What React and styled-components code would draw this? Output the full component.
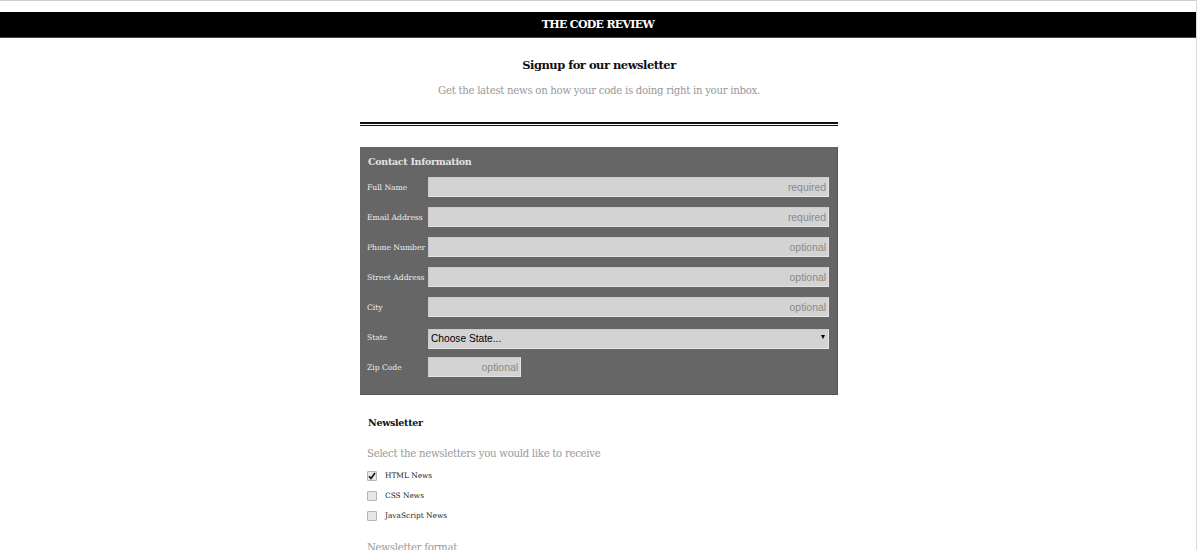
import React from "react";
import styled, { createGlobalStyle } from "styled-components";

const Global = createGlobalStyle`
  html, body { margin: 0; padding: 0; background: #fff; }
  body { font-family: "DejaVu Serif", "Liberation Serif", serif; overflow: hidden; }
`;

const Page = styled.div`
  width: 1196px;
  min-height: 515px;
  border-top: 1px solid #cfcfcf;
  border-right: 1px solid #d8d8d8;
  padding-top: 11px;
  padding-bottom: 40px;
`;

const Header = styled.header`
  height: 25px;
  background: #000;
  display: flex;
  align-items: center;
  justify-content: center;
  border-bottom: 1px solid #444;
`;

const Brand = styled.h1`
  margin: 0;
  color: #fff;
  font-size: 11px;
  font-weight: bold;
  letter-spacing: -0.7px;
`;

const Content = styled.div`
  padding-left: 2px;
`;

const Main = styled.main`
  width: 478px;
  margin: 0 auto;
  display: flex;
  flex-direction: column;
`;

const Title = styled.h2`
  margin: 20px 0 0;
  text-align: center;
  font-size: 11.5px;
  font-weight: bold;
  letter-spacing: -0.5px;
  color: #111;
`;

const Lead = styled.p`
  margin: 13px 0 0;
  text-align: center;
  font-size: 10.2px;
  letter-spacing: -0.3px;
  color: #999;
`;

const Rule = styled.div`
  margin-top: 26px;
  height: 1px;
  border-top: 2px solid #111;
  border-bottom: 1px solid #111;
`;

const Panel = styled.section`
  margin-top: 21px;
  background: #666;
  padding: 9px 8px 17px 7px;
  display: flex;
  flex-direction: column;
  gap: 10px;
  border-right: 1px solid #555;
  border-bottom: 1px solid #555;
`;

const PanelTitle = styled.h3`
  margin: 0 0 0 1px;
  font-size: 9.5px;
  font-weight: bold;
  letter-spacing: -0.3px;
  color: #e4e4e4;
  line-height: 11px;
`;

const Row = styled.div`
  display: flex;
  align-items: center;
  height: 20px;
`;

const Label = styled.label`
  width: 61px;
  flex: none;
  font-size: 7.6px;
  color: #eee;
`;

const Input = styled.input`
  box-sizing: border-box;
  height: 20px;
  width: ${(p) => (p.$w ? `${p.$w}px` : "auto")};
  flex: ${(p) => (p.$w ? "none" : "1")};
  background: #d3d3d3;
  border: 1px solid #e4e4e4;
  border-top-color: #cacaca;
  border-left-color: #cacaca;
  padding: 0 2px;
  text-align: right;
  font-family: "Liberation Sans", Arial, sans-serif;
  font-size: 10.4px;
  outline: none;
  &::placeholder { color: #8a8a8a; }
`;

const SelectWrap = styled.div`
  position: relative;
  flex: 1;
  height: 20px;
  &::after {
    content: "";
    position: absolute;
    right: 4px;
    top: 8px;
    border-left: 2.5px solid transparent;
    border-right: 2.5px solid transparent;
    border-top: 4px solid #000;
  }
`;

const Select = styled.select`
  appearance: none;
  box-sizing: border-box;
  width: 100%;
  height: 20px;
  background: #d3d3d3;
  border: 1px solid #e4e4e4;
  border-top-color: #cacaca;
  border-left-color: #cacaca;
  padding: 0 2px;
  font-family: "Liberation Sans", Arial, sans-serif;
  font-size: 10.2px;
  color: #000;
  outline: none;
`;

const Section = styled.section`
  padding: 21px 8px 0 7px;
  display: flex;
  flex-direction: column;
`;

const SectionTitle = styled.h3`
  margin: 0 0 0 1px;
  font-size: 9.5px;
  font-weight: bold;
  letter-spacing: -0.3px;
  color: #111;
  line-height: 14px;
`;

const Hint = styled.p`
  margin: ${(p) => p.$mt || 17}px 0 0;
  font-size: 10.2px;
  letter-spacing: -0.3px;
  color: #999;
  line-height: 13px;
`;

const Checks = styled.div`
  margin-top: 9px;
  display: flex;
  flex-direction: column;
  gap: 7px;
`;

const CheckRow = styled.label`
  display: flex;
  align-items: center;
  gap: 8px;
  height: 13px;
  font-size: 7.4px;
  color: #222;
`;

const Box = styled.span`
  box-sizing: border-box;
  width: 10px;
  height: 10px;
  flex: none;
  background: #e6e6e6;
  border: 1px solid #b5b5b5;
  border-radius: 1px;
  display: flex;
  align-items: center;
  justify-content: center;
`;

const Check = ({ checked, children }) => (
  <CheckRow>
    <Box>
      {checked && (
        <svg width="8" height="8" viewBox="0 0 8 8">
          <path d="M1 4.2 L3 6.5 L7 1" fill="none" stroke="#111" strokeWidth="1.6" />
        </svg>
      )}
    </Box>
    {children}
  </CheckRow>
);

const fields = [
  ["Full Name", "required"],
  ["Email Address", "required"],
  ["Phone Number", "optional"],
  ["Street Address", "optional"],
  ["City", "optional"],
];

export default function App() {
  return (
    <>
      <Global />
      <Page>
        <Header>
          <Brand>THE CODE REVIEW</Brand>
        </Header>
        <Content>
          <Main>
            <Title>Signup for our newsletter</Title>
            <Lead>Get the latest news on how your code is doing right in your inbox.</Lead>
            <Rule />
            <Panel>
              <PanelTitle>Contact Information</PanelTitle>
              {fields.map(([l, p]) => (
                <Row key={l}>
                  <Label>{l}</Label>
                  <Input placeholder={p} />
                </Row>
              ))}
              <Row>
                <Label>State</Label>
                <SelectWrap>
                  <Select defaultValue="">
                    <option value="">Choose State...</option>
                  </Select>
                </SelectWrap>
              </Row>
              <Row>
                <Label>Zip Code</Label>
                <Input $w={93} placeholder="optional" />
              </Row>
            </Panel>
            <Section>
              <SectionTitle>Newsletter</SectionTitle>
              <Hint>Select the newsletters you would like to receive</Hint>
              <Checks>
                <Check checked>HTML News</Check>
                <Check>CSS News</Check>
                <Check>JavaScript News</Check>
              </Checks>
              <Hint $mt={19}>Newsletter format</Hint>
            </Section>
          </Main>
        </Content>
      </Page>
    </>
  );
}
